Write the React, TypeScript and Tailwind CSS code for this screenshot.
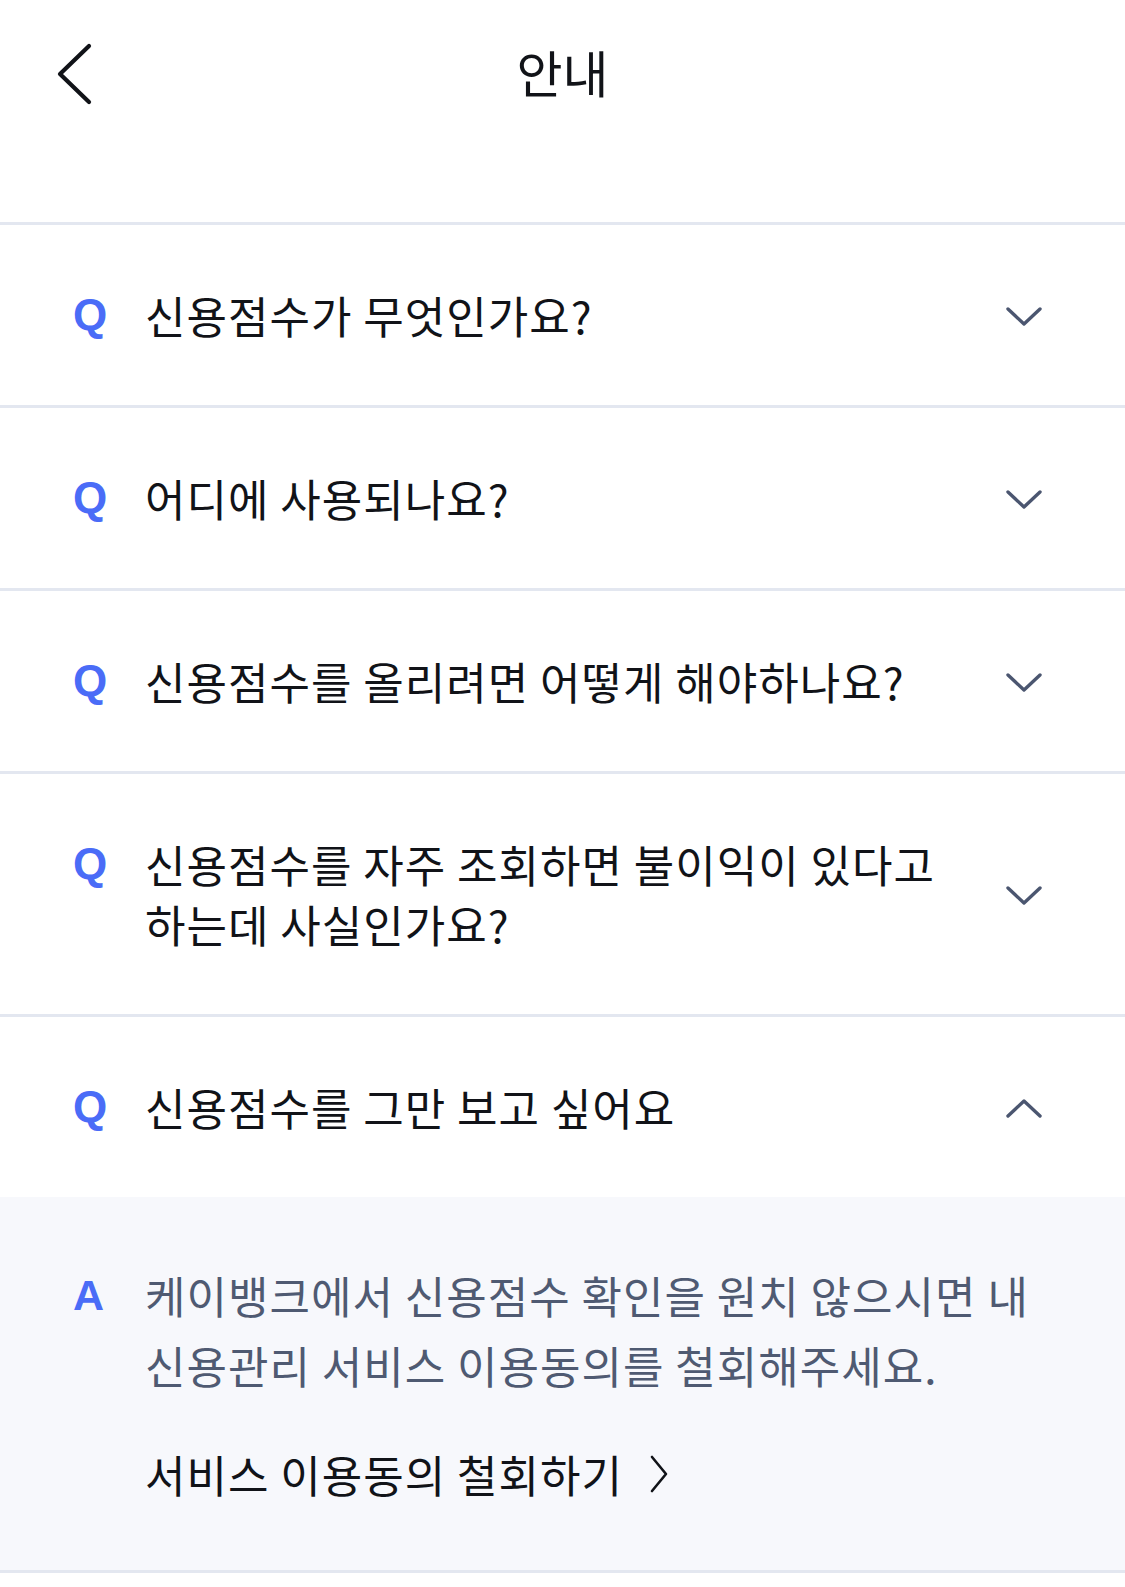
import React from "react";

const faqs: { q: string; open?: boolean }[] = [
  { q: "신용점수가 무엇인가요?" },
  { q: "어디에 사용되나요?" },
  { q: "신용점수를 올리려면 어떻게 해야하나요?" },
  { q: "신용점수를 자주 조회하면 불이익이 있다고 하는데 사실인가요?" },
  { q: "신용점수를 그만 보고 싶어요", open: true },
];

function Chevron({ up }: { up?: boolean }) {
  return (
    <svg width="38" height="22" viewBox="0 0 38 22" className={up ? "shrink-0 mt-[2px]" : "shrink-0 mt-[4px]"}>
      <polyline
        points={up ? "3,19 19,4 35,19" : "3,3 19,18 35,3"}
        fill="none"
        stroke="#4b5670"
        strokeWidth="3.4"
        strokeLinecap="round"
        strokeLinejoin="round"
      />
    </svg>
  );
}

function Divider() {
  return <div className="h-[3px] bg-[#e3e7f0]" />;
}

export default function App() {
  return (
    <div className="w-[1125px] min-h-[1587px] bg-white font-['Noto_Sans_CJK_KR','Noto_Sans',sans-serif] text-[#111318]">
      <header className="h-[222px] flex flex-col">
        <div className="h-[148px] flex items-center pl-[56px] pr-[56px]">
          <svg width="38" height="62" viewBox="0 0 38 62" className="shrink-0">
            <polyline
              points="33,3 4,31 33,59"
              fill="none"
              stroke="#111318"
              strokeWidth="4.2"
              strokeLinecap="round"
              strokeLinejoin="round"
            />
          </svg>
          <h1 className="flex-1 text-center text-[50px] leading-none font-normal mb-[6px]">안내</h1>
          <div className="w-[38px] shrink-0" />
        </div>
      </header>
      <Divider />
      {faqs.map((f, i) => (
        <div key={i}>
          <div className="flex items-center pl-[73px] pr-[82px] py-[60px]">
            <div className="flex flex-1 items-start">
              <span className="w-[72px] shrink-0 font-['Liberation_Sans',Arial,sans-serif] font-bold text-[44px] leading-[60px] text-[#4a6cf7]">
                Q
              </span>
              <p className="flex-1 text-[44px] leading-[60px] tracking-[1px] break-keep pr-[40px]">{f.q}</p>
            </div>
            <Chevron up={f.open} />
          </div>
          {f.open ? (
            <div className="bg-[#f7f8fc] pl-[73px] pr-[60px] pt-[63px] pb-[61px] flex items-start">
              <span className="w-[72px] shrink-0 font-['Liberation_Sans',Arial,sans-serif] font-bold text-[43px] leading-[70px] text-[#4a6cf7]">
                A
              </span>
              <div className="flex-1">
                <p className="text-[44px] leading-[70px] tracking-[1px] break-keep text-[#4f5a72]">
                  케이뱅크에서 신용점수 확인을 원치 않으시면 내 신용관리 서비스 이용동의를 철회해주세요.
                </p>
                <a className="mt-[39px] flex items-center gap-[26px] text-[44px] leading-[70px] tracking-[1px] text-[#111318]">
                  <span>서비스 이용동의 철회하기</span>
                  <svg width="20" height="40" viewBox="0 0 20 40" className="shrink-0">
                    <polyline
                      points="3,3 17,20 3,37"
                      fill="none"
                      stroke="#111318"
                      strokeWidth="2.6"
                      strokeLinecap="round"
                      strokeLinejoin="round"
                    />
                  </svg>
                </a>
              </div>
            </div>
          ) : null}
          <Divider />
        </div>
      ))}
    </div>
  );
}
